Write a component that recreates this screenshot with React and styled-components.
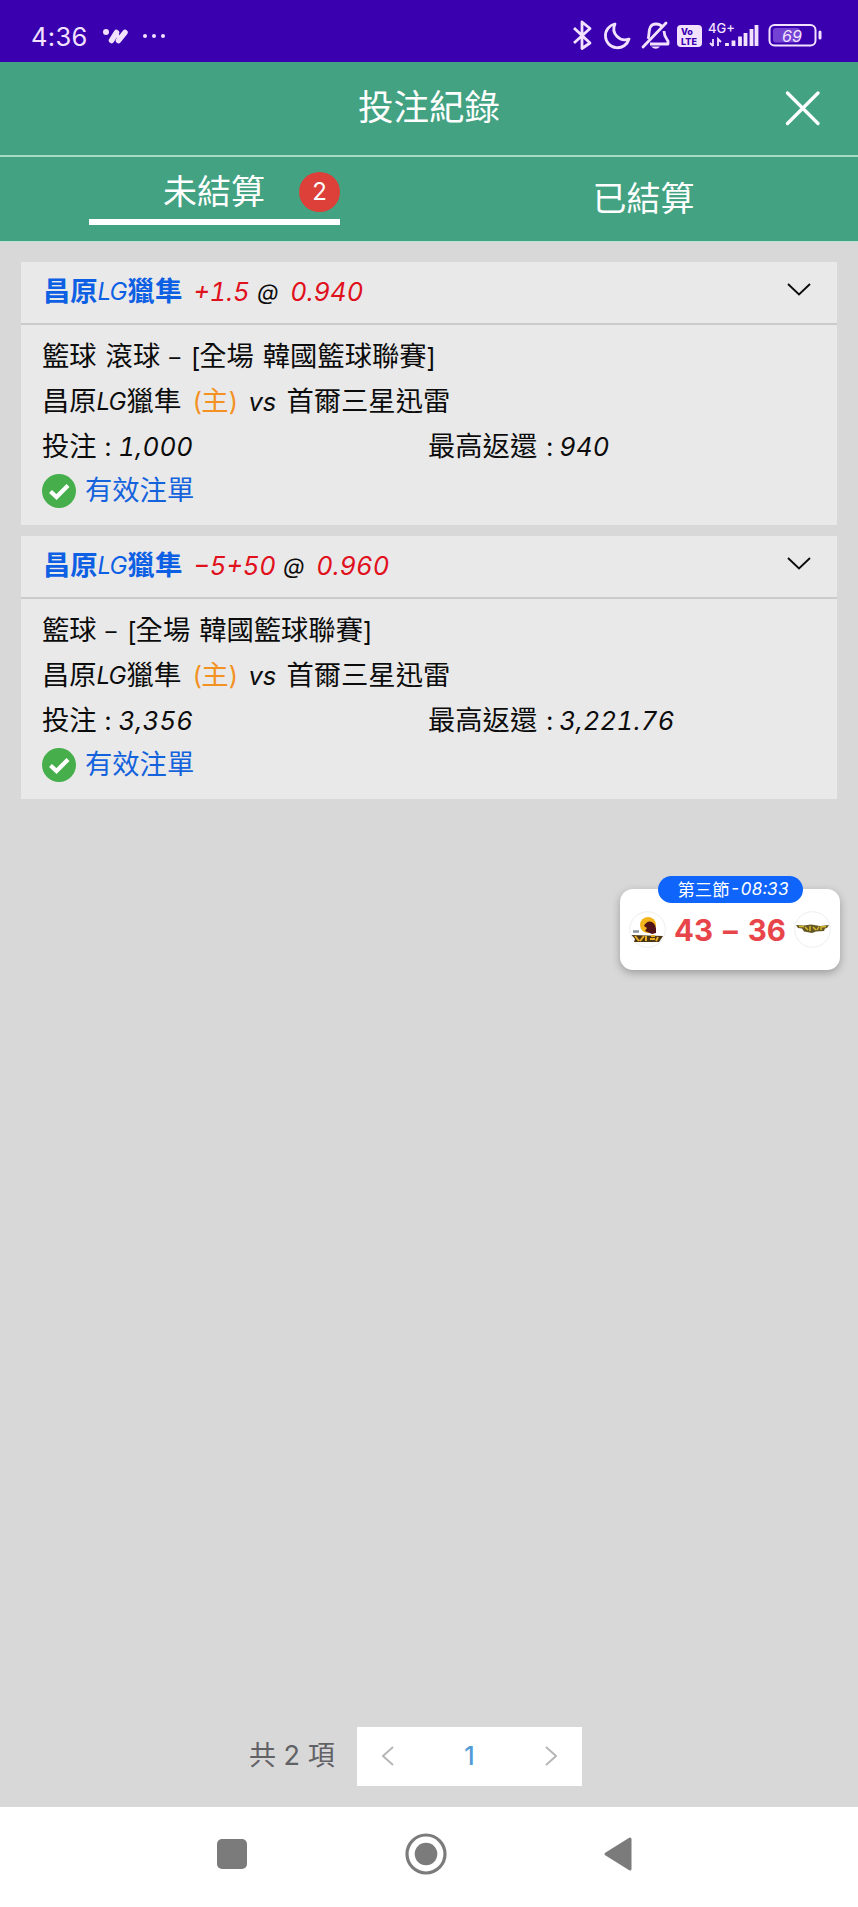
import React from 'react';

import styled, {createGlobalStyle} from 'styled-components';

const GlobalStyle = createGlobalStyle`
  *, *::before, *::after {
    box-sizing: border-box;
  }

  body {
    margin: 0;
    background: #d8d8d8;
    font-family: 'Inter', 'Noto Sans CJK TC', sans-serif;
    color: #0c0c0c;
  }

  svg {
    display: block;
  }
`;

const Page = styled.div`
  display: flex;
  flex-direction: column;
  width: 858px;
  height: 1907px;
  overflow: hidden;
  background: #d8d8d8;
`;

const StatusBar = styled.div`
  display: flex;
  align-items: center;
  flex: none;
  height: 62px;
  padding: 11px 36px 0 31px;
  background: #3a00b0;
  color: #f3e2ff;
`;

const Clock = styled.div`
  width: 72px;
  padding-top: 1px;
  font-size: 25.5px;
  line-height: 30px;
  letter-spacing: 0.3px;
  white-space: nowrap;
`;

const StatusIcons = styled.div`
  margin-left: auto;
  padding-bottom: 2px;
`;

const Header = styled.header`
  display: grid;
  grid-template-columns: 100px 1fr 100px;
  align-items: center;
  flex: none;
  height: 95px;
  border-bottom: 2px solid #a9dac6;
  background: #42a281;
`;

const Title = styled.h1`
  grid-column: 2;
  margin: 0;
  padding-bottom: 2px;
  text-align: center;
  font-size: 35.5px;
  line-height: 48px;
  font-weight: 400;
  color: #fff;
`;

const CloseButton = styled.button`
  justify-self: end;
  margin-right: 37px;
  padding: 0;
  border: none;
  background: none;
`;

const Tabs = styled.nav`
  display: grid;
  grid-template-columns: 1fr 1fr;
  flex: none;
  height: 85px;
  border-bottom: 1px solid #b9e2d3;
  background: #42a281;
`;

const Tab = styled.div`
  display: flex;
  align-items: center;
  justify-content: center;
  padding-bottom: 1px;
  color: #fff;
  font-size: 34px;
  line-height: 46px;
`;

const ActiveTab = styled.div`
  display: flex;
  align-items: center;
  justify-content: flex-end;
  gap: 34px;
  width: 251px;
  height: 68px;
  border-bottom: 6px solid #fff;
  align-self: flex-start;
  padding-top: 8px;
`;

const Badge = styled.span`
  width: 41px;
  height: 40px;
  border-radius: 50%;
  background: #dc4039;
  font-size: 24px;
  line-height: 40px;
  text-align: center;
`;

const BetList = styled.main`
  display: flex;
  flex-direction: column;
  gap: 11px;
  flex: 1;
  padding: 20px 21px 0;
`;

const BetCard = styled.section`
  height: 263px;
  background: #e9e9e9;
`;

const BetHead = styled.div`
  display: flex;
  align-items: center;
  height: 63px;
  padding: 0 26px 2px 22px;
  border-bottom: 2px solid #cbcbcb;
  font-size: 27.3px;
  line-height: 40px;
  white-space: nowrap;
`;

const Team = styled.span`
  font-weight: ${(props) => (props.$bold ? 700 : 400)};
  color: ${(props) => (props.$bold ? '#0d5fe4' : 'inherit')};
`;

const Latin = styled.span`
  display: inline-block;
  flex: none;
  width: ${(props) => props.$width}px;
  font-size: ${(props) => props.$size ?? 25.5}px;
  line-height: 1;
  font-weight: 400;
  font-style: ${(props) => (props.$upright ? 'normal' : 'italic')};
  font-variant-numeric: tabular-nums;
  letter-spacing: ${(props) => props.$spacing ?? 0}px;
  margin-left: ${(props) => props.$left ?? 0}px;
  color: ${(props) => props.$color ?? 'inherit'};
  white-space: nowrap;
`;

const Toggle = styled.div`
  margin: 0 0 4px auto;
`;

const BetBody = styled.div`
  padding: 10px 21px 0;
`;

const Line = styled.div`
  display: flex;
  align-items: center;
  height: 44.7px;
  font-size: 27.3px;
  line-height: 40px;
  white-space: nowrap;
`;

const Amount = styled.div`
  display: flex;
  align-items: center;
  width: ${(props) => props.$width ?? 'auto'};
`;

const Home = styled.span`
  display: flex;
  align-items: center;
  margin-left: 11px;
  color: #f39122;
`;

const Valid = styled.span`
  margin-left: 9px;
  color: #1463dd;
`;

const Score = styled.aside`
  position: absolute;
  left: 620px;
  top: 889px;
  display: flex;
  align-items: center;
  justify-content: space-between;
  width: 220px;
  height: 81px;
  padding: 0 9px;
  border-radius: 13px;
  background: #fff;
  box-shadow: 0 3px 9px rgba(0, 0, 0, 0.28);
`;

const Period = styled.div`
  position: absolute;
  left: 38px;
  top: -13px;
  display: flex;
  align-items: center;
  justify-content: center;
  width: 145px;
  height: 27px;
  border-radius: 14px;
  background: #0f65fb;
  color: #fff;
  font-size: 17.3px;
  line-height: 26px;
`;

const Points = styled.div`
  display: flex;
  justify-content: space-between;
  width: 112px;
  font-size: 29.5px;
  line-height: 40px;
  font-weight: 700;
  color: #e8454b;
`;

const Pager = styled.footer`
  display: flex;
  align-items: center;
  flex: none;
  height: 59px;
  margin-bottom: 21px;
  padding-left: 249px;
`;

const Total = styled.div`
  width: 108px;
  padding-bottom: 2px;
  font-size: 27px;
  line-height: 40px;
  white-space: nowrap;
  color: #626266;
`;

const PageBox = styled.div`
  display: flex;
  align-items: center;
  justify-content: space-between;
  width: 225px;
  height: 59px;
  padding: 0 25px 1px;
  background: #fff;
  color: #519bd6;
  font-size: 25px;
  font-weight: 500;
`;

const NavBar = styled.div`
  display: flex;
  flex: none;
  align-items: center;
  height: 100px;
  padding: 0 0 6px 217px;
  background: #fff;
`;

const NavIcon = styled.svg`
  margin-right: ${(props) => props.$gap ?? 0}px;
`;

const bets = [
  {
    handicap: '+1.5',
    handicapWidth: 64,
    odds: '0.940',
    sport: '籃球 滾球',
    stake: '1,000',
    payout: '940',
  },
  {
    handicap: '−5+50',
    handicapWidth: 90,
    odds: '0.960',
    sport: '籃球',
    stake: '3,356',
    payout: '3,221.76',
  },
];

const MessageIcon = () => (
  <svg width="64" height="20" viewBox="0 0 64 20">
    <g stroke="#f3e2ff" strokeLinecap="round" fill="none">
      <path d="M8.500 13.500L13.500 5.500M15.500 13.500L22 5.500" strokeWidth="5.500" />
      <path d="M13.500 5.500L16 13" strokeWidth="3.500" />
    </g>
    <g fill="#f3e2ff">
      <circle cx="3" cy="5" r="3" />
      <circle cx="42" cy="9" r="2" />
      <circle cx="51" cy="9" r="2" />
      <circle cx="60" cy="9" r="2" />
    </g>
  </svg>
);

const SystemIcons = () => (
  <svg width="250" height="34" viewBox="572 19 250 34">
    <g fill="none" stroke="#f3e2ff" strokeWidth="2.800" strokeLinejoin="round">
      <path d="M574 28L590 43L582 48.500V22L590 28.500L574 43" />
      <path d="M615 24A12 12 0 1 0 629 39A11 11 0 0 1 615 24Z" />
      <path d="M648 39C650 35 647 24 656 24C659 24 661 25 662 27M664 31C664 36 666 38 668 41V44H650" />
      <path d="M643 47L666 23" strokeLinecap="round" />
    </g>
    <path d="M651 46.500H660Q656 51 651 46.500Z" fill="#f3e2ff" />
    <rect x="677" y="25" width="25" height="22" rx="4" fill="#f3e2ff" />
    <g fontFamily="Inter" fontWeight="800" fill="#3a00b0" fontSize="9">
      <text x="681" y="34.500">Vo</text>
      <text x="681" y="44.500">LTE</text>
    </g>
    <text x="708" y="32.500" fontFamily="Inter" fontSize="13" fontWeight="500" fill="#f3e2ff">4G+</text>
    <g stroke="#f3e2ff">
      <path d="M713 39V46M710 43L713 46M718 46V39L721 42" fill="none" strokeWidth="1.800" />
      <path d="M727 46V43M733.500 46V40.500M740 46V36.500M745.500 46V33M751.500 46V29M756.500 46V25" strokeWidth="3.800" />
    </g>
    <rect x="769.500" y="25" width="46" height="20.500" rx="5" fill="none" stroke="#f3e2ff" strokeWidth="2" />
    <rect x="773" y="28" width="27" height="14.500" rx="3" fill="#7443d4" />
    <path d="M820 32V38" stroke="#f3e2ff" strokeWidth="3" strokeLinecap="round" />
    <text x="782" y="41.500" fontFamily="Inter" fontStyle="italic" fontSize="16" fill="#f3e2ff">69</text>
  </svg>
);

const CheckIcon = () => (
  <svg width="34" height="34" viewBox="0 0 34 34">
    <circle cx="17" cy="17" r="17" fill="#46af4c" />
    <path d="M8.500 17.500L14.500 23L26 11.500" fill="none" stroke="#fff" strokeWidth="4.200" />
  </svg>
);

const Chevron = ({d, width = 24, height = 13, color = '#0c0c0c'}) => (
  <svg width={width} height={height} viewBox={`0 0 ${width} ${height}`}>
    <path d={d} fill="none" stroke={color} strokeWidth="1.900" />
  </svg>
);

const HomeLogo = () => (
  <svg width="37" height="37" viewBox="0 0 37 37">
    <circle cx="18.500" cy="18.500" r="17.800" fill="#fff" stroke="#eee" />
    <circle cx="19" cy="14" r="8" fill="#f3b51b" />
    <path d="M16 20L18 17L15 15Q18 9 23 11Q28 14 27 22L23 23Z" fill="#501318" />
    <path d="M2.500 24L34 25L30 31H5L6 28Z" fill="#4a3515" />
    <path d="M6 25L10 30M11 30L15 25M17 25V30M22 25H26M21 28H26M29 26L27 30" stroke="#e8ac25" strokeWidth="2" />
    <path d="M4 20.500H10" stroke="#85929a" strokeWidth="2.500" />
  </svg>
);

const AwayLogo = () => (
  <svg width="37" height="37" viewBox="0 0 37 37">
    <circle cx="18.500" cy="18.500" r="17.800" fill="#fff" stroke="#eee" />
    <path d="M2 14L10 14.500L17 13.500L26 15L35 14L33 17L31 17.500L30 20L22 20.500L18 22L10 20.500L8 17.500L4 17Z" fill="#635823" />
    <path d="M5 15.500H10M11 16L14 19M16 15V20M19 16L22 19M25 15.500L23 19M27 19V16L32 15.500" fill="none" stroke="#d7b72d" strokeWidth="1.500" />
  </svg>
);

const Bet = ({bet}) => (
  <BetCard>
    <BetHead>
      <Team $bold>昌原</Team>
      <Latin $width={30} $size={24} $color="#0d5fe4" $spacing={-1}>LG</Latin>
      <Team $bold>獵隼</Team>
      <Latin $left={11} $width={bet.handicapWidth} $color="#e0101c">{bet.handicap}</Latin>
      <Latin $width={33} $size={22}>@</Latin>
      <Latin $width={72} $color="#e0101c">{bet.odds}</Latin>
      <Toggle>
        <Chevron d="M1 1L12 11.500L23 1" />
      </Toggle>
    </BetHead>
    <BetBody>
      <Line>
        <Team>{bet.sport.split(' ')[0]}</Team>
        {bet.sport.includes(' ') && <Latin $width={9}>&nbsp;</Latin>}
        {bet.sport.split(' ')[1]}
        <Latin $left={9} $width={21} $size={22} $upright>–</Latin>
        <Latin $width={9} $upright>[</Latin>
        全場
        <Latin $width={9}>&nbsp;</Latin>
        韓國籃球聯賽
        <Latin $width={9} $upright>]</Latin>
      </Line>
      <Line>
        <Team>昌原</Team>
        <Latin $width={30} $size={24} $spacing={-1}>LG</Latin>
        <Team>獵隼</Team>
        <Home>
          <Latin $width={9} $upright>(</Latin>
          主
          <Latin $width={9} $upright>)</Latin>
        </Home>
        <Latin $left={11} $width={38}>vs</Latin>
        首爾三星迅雷
      </Line>
      <Line>
        <Amount $width="386px">
          投注
          <Latin $left={8} $width={14} $upright>:</Latin>
          <Latin $width={72} $spacing={0.3}>{bet.stake}</Latin>
        </Amount>
        <Amount>
          最高返還
          <Latin $left={9} $width={13} $upright>:</Latin>
          <Latin $width={112} $spacing={0.3}>{bet.payout}</Latin>
        </Amount>
      </Line>
      <Line>
        <CheckIcon />
        <Valid>有效注單</Valid>
      </Line>
    </BetBody>
  </BetCard>
);

export default function App() {
  return (
    <>
      <GlobalStyle />
      <Page>
        <StatusBar>
          <Clock>4:36</Clock>
          <MessageIcon />
          <StatusIcons>
            <SystemIcons />
          </StatusIcons>
        </StatusBar>
        <Header>
          <Title>投注紀錄</Title>
          <CloseButton aria-label="close">
            <svg width="36" height="36" viewBox="0 0 36 36">
              <path d="M2.500 2L33 32.500M33 2L2.500 32.500" stroke="#fff" strokeWidth="3.300" strokeLinecap="round" />
            </svg>
          </CloseButton>
        </Header>
        <Tabs>
          <Tab>
            <ActiveTab>
              未結算
              <Badge>2</Badge>
            </ActiveTab>
          </Tab>
          <Tab>已結算</Tab>
        </Tabs>
        <BetList>
          {bets.map((bet) => (
            <Bet key={bet.odds} bet={bet} />
          ))}
        </BetList>
        <Pager>
          <Total>共 2 項</Total>
          <PageBox>
            <Chevron width={12} height={20} color="#b6b6b6" d="M11 1L1 10L11 19" />
            1
            <Chevron width={12} height={20} color="#b6b6b6" d="M1 1L11 10L1 19" />
          </PageBox>
        </Pager>
        <NavBar>
          <NavIcon $gap={158} width="30" height="30">
            <rect width="30" height="30" rx="5" fill="#7b7b7b" />
          </NavIcon>
          <NavIcon $gap={156} width="42" height="42">
            <circle cx="21" cy="21" r="19" fill="none" stroke="#7b7b7b" strokeWidth="3.200" />
            <circle cx="21" cy="21" r="11.300" fill="#7b7b7b" />
          </NavIcon>
          <NavIcon width="30" height="36" viewBox="0 0 30 36">
            <path d="M3 18L27 3V33Z" fill="#7b7b7b" stroke="#7b7b7b" strokeWidth="3" strokeLinejoin="round" />
          </NavIcon>
        </NavBar>
      </Page>
      <Score>
        <Period>
          第三節
          <Latin $width={54} $size={17}>-08:33</Latin>
        </Period>
        <HomeLogo />
        <Points>
          <span>43</span>
          <span>–</span>
          <span>36</span>
        </Points>
        <AwayLogo />
      </Score>
    </>
  );
}
